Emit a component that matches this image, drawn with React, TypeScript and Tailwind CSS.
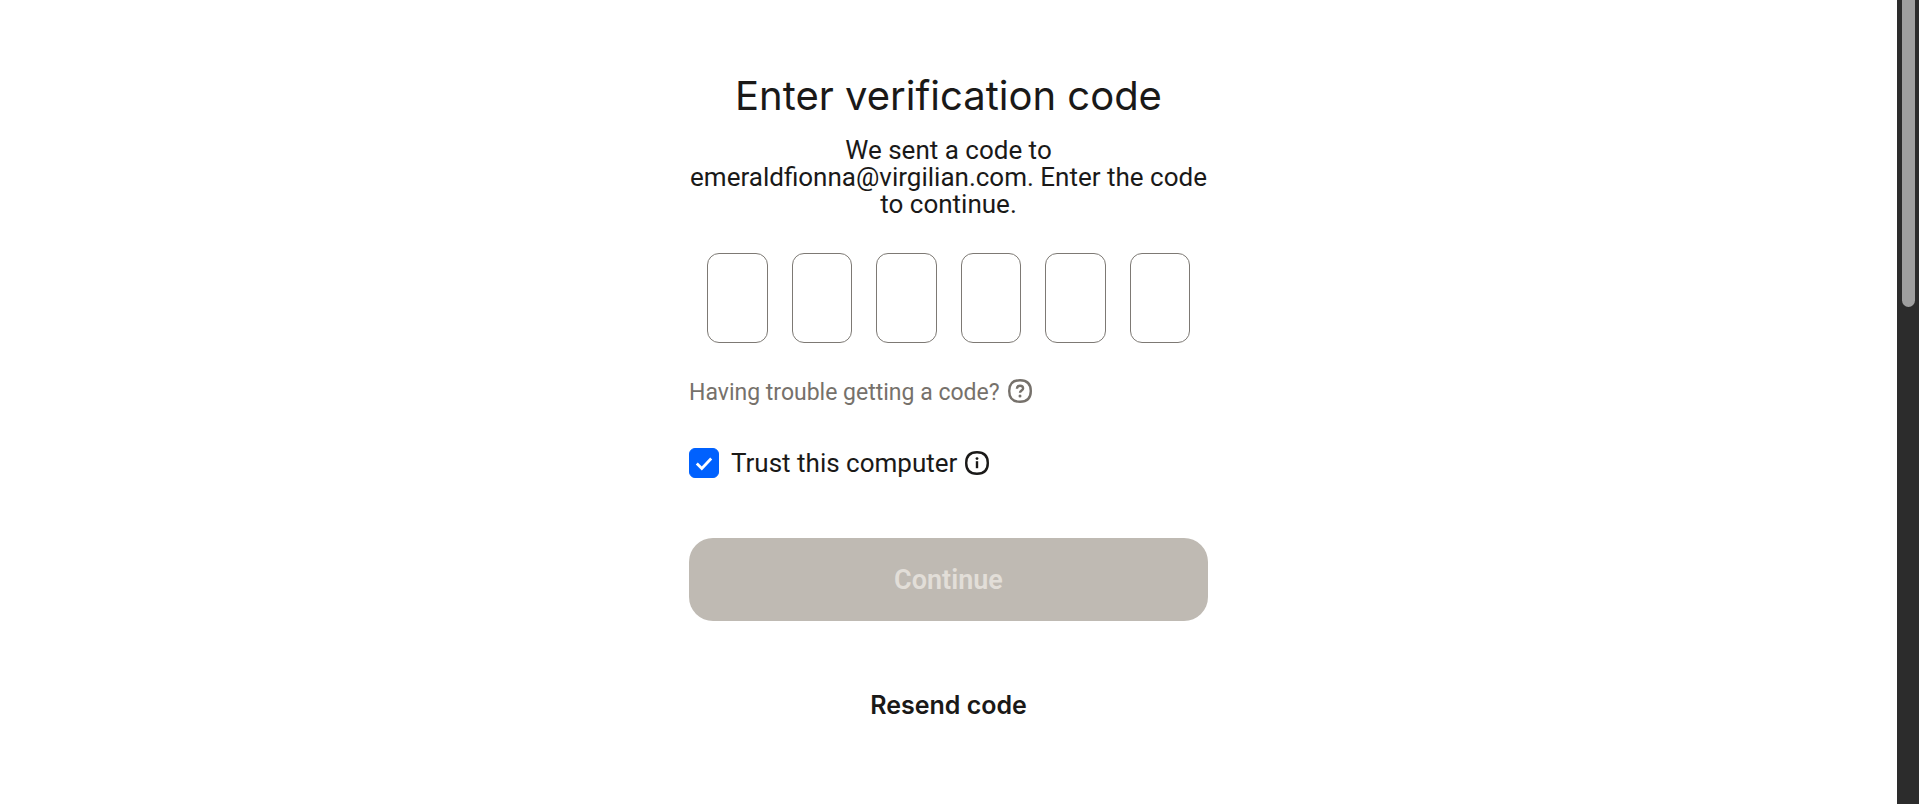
import { useState } from "react";

const digits = [1, 2, 3, 4, 5, 6];

function HelpIcon() {
  return (
    <svg viewBox="0 0 24 24" className="size-6" fill="none" stroke="currentColor" strokeWidth="2.4" aria-hidden="true">
      <path d="M12 1.2C19 1.2 22.8 5 22.8 12S19 22.8 12 22.8 1.2 19 1.2 12 5 1.2 12 1.2Z" />
      <path d="M8.9 9.7C9 7.7 10.2 6.8 12 6.8s3.1 1 3.1 2.6c0 2.1-3.1 2.2-3.1 4.4" />
      <circle cx="12" cy="16.9" r="1.5" fill="currentColor" stroke="none" />
    </svg>
  );
}

function InfoIcon() {
  return (
    <svg viewBox="0 0 24 24" className="size-6" fill="none" stroke="currentColor" strokeWidth="2.4" aria-hidden="true">
      <path d="M12 1.2C19 1.2 22.8 5 22.8 12S19 22.8 12 22.8 1.2 19 1.2 12 5 1.2 12 1.2Z" />
      <path d="M12 10.2v7" />
      <circle cx="12" cy="7.6" r="1.4" fill="currentColor" stroke="none" />
    </svg>
  );
}

export default function App() {
  const [trusted, setTrusted] = useState(true);
  const [code, setCode] = useState<string[]>(digits.map(() => ""));

  return (
    <div className="flex h-screen overflow-hidden bg-white text-[#1a1918]">
      <main className="flex flex-1 justify-center px-6 pt-[72px] font-['Roboto',sans-serif]">
        <form className="flex w-full max-w-[519px] flex-col" onSubmit={(e) => e.preventDefault()}>
          <h1 className="text-center font-['Inter',sans-serif] text-[40px] leading-12">Enter verification code</h1>
          <p className="mt-[17px] text-center text-[26px] leading-[27px]">
            We sent a code to emeraldfionna@virgilian.com. Enter the code to continue.
          </p>
          <div className="mx-[18px] mt-[35px] flex gap-6">
            {digits.map((digit, index) => (
              <input
                key={digit}
                aria-label={`Digit ${digit}`}
                inputMode="numeric"
                maxLength={1}
                value={code[index]}
                onChange={(e) => setCode(code.map((c, i) => (i === index ? e.target.value : c)))}
                className="h-[90px] min-w-0 flex-1 rounded-xl border border-[#7d7974] text-center text-3xl"
              />
            ))}
          </div>
          <button type="button" className="mt-9 flex items-start gap-2 self-start text-[23px] leading-7 text-[#76716b]">
            Having trouble getting a code?
            <HelpIcon />
          </button>
          <div className="mt-10 flex items-center gap-2">
            <label className="flex items-center gap-3 text-[26px] leading-8">
              <span className="grid size-[30px]">
                <input
                  type="checkbox"
                  checked={trusted}
                  onChange={(e) => setTrusted(e.target.checked)}
                  className="peer col-start-1 row-start-1 appearance-none rounded-md border border-[#76716b] checked:border-[#0061fe] checked:bg-[#0061fe]"
                />
                <svg
                  viewBox="0 0 30 30"
                  className="pointer-events-none invisible col-start-1 row-start-1 text-white peer-checked:visible"
                  fill="none"
                  stroke="currentColor"
                  strokeWidth="2.8"
                  aria-hidden="true"
                >
                  <path d="M7.8 15.5l5 5 9.4-10" />
                </svg>
              </span>
              Trust this computer
            </label>
            <button type="button" aria-label="About trusted computers">
              <InfoIcon />
            </button>
          </div>
          <button type="submit" disabled className="mt-[59px] h-[83px] rounded-3xl bg-[#bfbab3] pt-0.5 text-[27px] font-semibold text-[#e2ded8]">
            Continue
          </button>
          <button type="button" className="mt-[68px] self-center font-['Inter',sans-serif] text-[25px] leading-8 font-semibold">
            Resend code
          </button>
        </form>
      </main>
      <div className="flex w-[22px] justify-center bg-[#2c2c2c]" aria-hidden="true">
        <div className="h-[307px] w-[13px] rounded-b-full bg-[#9f9f9f]" />
      </div>
    </div>
  );
}
